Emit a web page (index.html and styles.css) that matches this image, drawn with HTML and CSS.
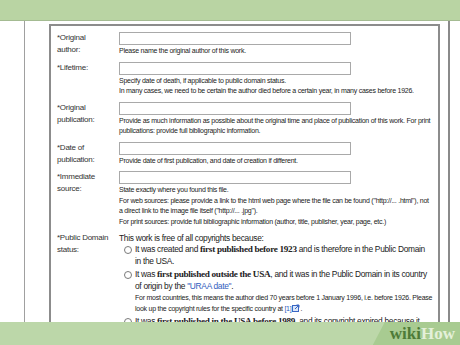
FILE: index.html
```html
<!DOCTYPE html>
<html lang="en">
<head>
    <meta charset="UTF-8">
    <meta name="viewport" content="width=device-width, initial-scale=1.0">
    <title>Upload File - Public Domain</title>
    <link rel="stylesheet" href="styles.css">
</head>
<body>
    <div class="top-band"></div>

    <div class="page">
        <div class="form-box">
            <div class="row">
                <div class="label">*Original<br>author:</div>
                <div class="field">
                    <input type="text" class="text-input">
                    <p class="help">Please name the original author of this work.</p>
                </div>
            </div>

            <div class="row">
                <div class="label">*Lifetime:</div>
                <div class="field">
                    <input type="text" class="text-input">
                    <p class="help">Specify date of death, if applicable to public domain status.<br>In many cases, we need to be certain the author died before a certain year, in many cases before 1926.</p>
                </div>
            </div>

            <div class="row">
                <div class="label">*Original<br>publication:</div>
                <div class="field">
                    <input type="text" class="text-input">
                    <p class="help">Provide as much information as possible about the original time and place of publication of this work. For print<br>publications: provide full bibliographic information.</p>
                </div>
            </div>

            <div class="row">
                <div class="label">*Date of<br>publication:</div>
                <div class="field">
                    <input type="text" class="text-input">
                    <p class="help">Provide date of first publication, and date of creation if different.</p>
                </div>
            </div>

            <div class="row">
                <div class="label">*Immediate<br>source:</div>
                <div class="field">
                    <input type="text" class="text-input">
                    <p class="help">State exactly where you found this file.<br>For web sources: please provide a link to the html web page where the file can be found ("http://... .html"), not<br>a direct link to the image file itself ("http://... .jpg").<br>For print sources: provide full bibliographic information (author, title, publisher, year, page, etc.)</p>
                </div>
            </div>

            <div class="row">
                <div class="label">*Public Domain<br>status:</div>
                <div class="field">
                    <p class="intro">This work is free of all copyrights because:</p>
                    <ul class="options">
                        <li class="option">
                            <input type="radio" name="pd-status" class="radio">
                            <div class="option-text">It was created and <b>first published before 1923</b> and is therefore in the Public Domain<br>in the USA.</div>
                        </li>
                        <li class="option">
                            <input type="radio" name="pd-status" class="radio">
                            <div class="option-text">It was <b>first published outside the USA</b>, and it was in the Public Domain in its country<br>of origin by the <a href="#">"URAA date"</a>.
                                <p class="note">For most countries, this means the author died 70 years before 1 January 1996, i.e. before 1926. Please<br>look up the copyright rules for the specific country at <a href="#">[1]</a><svg class="ext-icon" width="8" height="8" viewBox="0 0 8 8"><rect x="0.5" y="1.5" width="6" height="6" fill="#dbe6f8" stroke="#3a66c4"/><path d="M3 5 L7 1 M4.5 1 H7 V3.5" fill="none" stroke="#3a66c4"/></svg>.</p>
                            </div>
                        </li>
                        <li class="option">
                            <input type="radio" name="pd-status" class="radio">
                            <div class="option-text">It was <b>first published in the USA before 1989</b>, and its copyright expired because it</div>
                        </li>
                    </ul>
                </div>
            </div>
        </div>
    </div>

    <div class="watermark">
        <div class="brand"><span class="brand-wiki">wiki</span><span class="brand-how">How</span></div>
    </div>
</body>
</html>
```

FILE: styles.css
```css
/* Squeezed screenshot of an old upload form */
body {
    margin: 0;
    height: 345px;
    overflow: hidden;
    position: relative;
    background-color: #ffffff;
    color: #222;
    font-family: "Liberation Sans", Arial, sans-serif;
}

.top-band {
    height: 20px;
    background-color: #b9d4a3;
    border-bottom: 1px solid #a4bb92;
}

.page {
    margin-left: 24px;
    width: 423px;
    height: 330px;
    padding-top: 3px;
    border-left: 1px solid #a0a0a0;
    border-right: 2px solid #8a8a8a;
}

.form-box {
    margin: 0 8px 0 24px;
    height: 100%;
    padding: 6px 0 0 6px;
    border: 2px solid #8c8c8c;
    border-bottom: none;
}

.row {
    display: grid;
    grid-template-columns: 62px 1fr;
    margin-bottom: 5px;
}

.label {
    font-size: 8px;
    line-height: 12px;
    letter-spacing: -0.25px;
    color: #333;
}

.text-input {
    display: block;
    box-sizing: border-box;
    width: 232px;
    height: 13px;
    margin: 0;
    padding: 0;
    border: 1px solid #a9a9a9;
    background-color: #ffffff;
}

.help {
    margin: 1px 0 0;
    font-size: 7px;
    line-height: 10.5px;
    letter-spacing: -0.25px;
    white-space: nowrap;
}

.intro {
    margin: 0;
    font-size: 8.4px;
    line-height: 12px;
    letter-spacing: -0.3px;
    white-space: nowrap;
}

.options {
    list-style: none;
    margin: 0;
    padding: 0 0 0 5px;
    display: flex;
    flex-direction: column;
    gap: 2px;
}

.option {
    display: flex;
    align-items: flex-start;
    gap: 3px;
}

.radio {
    appearance: none;
    flex: none;
    width: 8px;
    height: 8px;
    margin: 2px 0 0;
    border: 1px solid #7a7a7a;
    border-radius: 50%;
    background-color: #ffffff;
}

.option-text {
    font-size: 8.4px;
    line-height: 11.5px;
    letter-spacing: -0.3px;
    white-space: nowrap;
}

.option-text b {
    font-family: "Liberation Serif", "Times New Roman", serif;
    font-size: 9.2px;
}

.note {
    margin: 0;
    font-size: 7px;
    line-height: 11px;
    letter-spacing: -0.25px;
}

a {
    color: #2f5bbd;
    text-decoration: none;
}

.ext-icon {
    margin-left: 1px;
    vertical-align: -1px;
}

/* wikiHow watermark strip over the bottom */
.watermark {
    position: absolute;
    left: 0;
    right: 0;
    bottom: 0;
    height: 23px;
    background-color: #bcd7a9;
    display: flex;
    justify-content: flex-end;
}

.brand {
    padding: 0 5px 0 17px;
    background-color: #a8cb91;
    clip-path: polygon(12px 0, 100% 0, 100% 100%, 0 100%);
    font-family: "Liberation Serif", "Times New Roman", serif;
    font-weight: bold;
    font-size: 17px;
    line-height: 23px;
}

.brand-wiki {
    color: #4e7b38;
}

.brand-how {
    color: #e4f0da;
}
```
